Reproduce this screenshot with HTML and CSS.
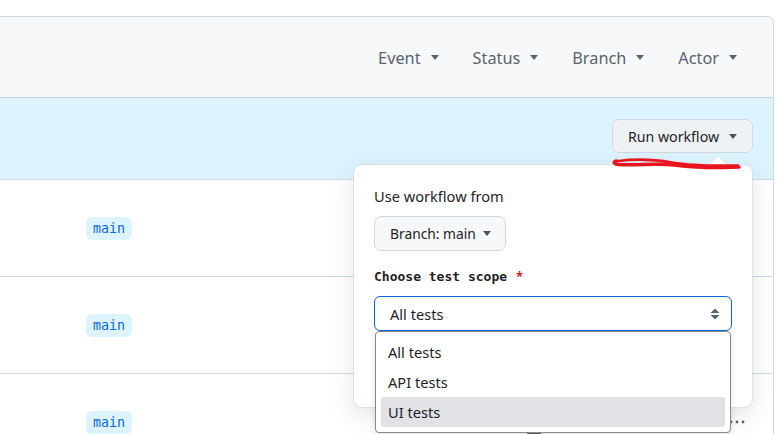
FILE: index.html
```html
<!DOCTYPE html>
<html>
<head>
<meta charset="utf-8">
<link rel="stylesheet" href="styles.css">
</head>
<body>
<div class="box">
  <div class="filters">
    <span class="filter">Event<i class="caret"></i></span>
    <span class="filter">Status<i class="caret"></i></span>
    <span class="filter">Branch<i class="caret"></i></span>
    <span class="filter">Actor<i class="caret"></i></span>
  </div>
  <div class="banner">
    <button class="run">Run workflow<i class="caret dark"></i></button>
    <svg class="scribble" width="132" height="16" viewBox="0 0 132 16">
      <path d="M5 4 C 1 4, 1 7, 6 7.5 C 25 8.5, 45 6, 62 8 C 80 10, 95 11, 112 10.5 L 127 10" fill="none" stroke="#e8141e" stroke-width="3.4" stroke-linecap="round"/>
      <path d="M7 4 C 25 1.5, 45 3, 60 5.5 C 75 8, 95 9, 126 8.5" fill="none" stroke="#e8141e" stroke-width="2.6" stroke-linecap="round"/>
    </svg>
    <div class="popover">
      <svg class="notch" width="20" height="10" viewBox="0 0 20 10"><path d="M0 10 L10 1 L20 10 Z" fill="#fff"/></svg>
      <div class="label">Use workflow from</div>
      <button class="branch">Branch: main<i class="caret dark"></i></button>
      <div class="field-label">Choose test scope <span class="req">*</span></div>
      <div class="field">
        <div class="select">
          <span>All tests</span>
          <svg width="10" height="16" viewBox="0 0 10 16"><path d="M0.5 7 L5 2.5 L9.5 7 Z M0.5 9 L5 13.5 L9.5 9 Z" fill="#59636e"/></svg>
        </div>
        <ul class="options">
          <li>All tests</li>
          <li>API tests</li>
          <li class="hl">UI tests</li>
        </ul>
      </div>
    </div>
  </div>
  <div class="row"><span class="badge">main</span></div>
  <div class="row"><span class="badge">main</span></div>
  <div class="row">
    <span class="badge">main</span>
    <svg class="cal" width="16" height="16" viewBox="0 0 16 16"><path d="M4.75 0a.75.75 0 0 1 .75.75V2h5V.75a.75.75 0 0 1 1.5 0V2h1.25c.97 0 1.75.78 1.75 1.75v10.5A1.75 1.75 0 0 1 13.25 16H2.75A1.75 1.75 0 0 1 1 14.25V3.75C1 2.78 1.78 2 2.75 2H4V.75A.75.75 0 0 1 4.75 0ZM2.5 7.5v6.75c0 .14.11.25.25.25h10.5a.25.25 0 0 0 .25-.25V7.5Z" fill="#59636e"/></svg>
    <svg class="kebab" width="16" height="16" viewBox="0 0 16 16"><circle cx="2" cy="8" r="1.4" fill="#59636e"/><circle cx="8" cy="8" r="1.4" fill="#59636e"/><circle cx="14" cy="8" r="1.4" fill="#59636e"/></svg>
  </div>
</div>
</body>
</html>
```
FILE: styles.css
```css
html, body {
  margin: 0;
  padding: 0;
  background: #fff;
  overflow: hidden;
  height: 434px;
}
body {
  font-family: "Noto Sans", "Open Sans", sans-serif;
  color: #1f2328;
}
.box {
  margin: 16px 7px 0 -10px;
  border: 1px solid #d1d9e0;
  border-radius: 6px 6px 0 0;
}
.filters {
  height: 79px;
  background: #f6f8fa;
  border-radius: 6px 6px 0 0;
  border-bottom: 1px solid #c3d5e4;
  display: flex;
  justify-content: flex-end;
  align-items: center;
  gap: 34px;
  padding-right: 36px;
  padding-top: 1px;
}
.filter {
  font-size: 16.3px;
  color: #59636e;
  display: flex;
  align-items: center;
  gap: 10px;
}
.caret {
  display: inline-block;
  width: 0;
  height: 0;
  border-left: 4.5px solid transparent;
  border-right: 4.5px solid transparent;
  border-top: 5px solid #59636e;
}
.caret.dark {
  border-top-color: #4a525b;
}
.banner {
  position: relative;
  height: 81px;
  background: #ddf4ff;
  border-bottom: 1px solid #d1d9e0;
  display: flex;
  justify-content: flex-end;
  align-items: flex-start;
  padding-right: 20px;
}
.run {
  margin-top: 21px;
  height: 34px;
  width: 141px;
  background: #eff2f5;
  border: 1px solid #d1d9e0;
  border-radius: 7px;
  font-family: inherit;
  font-size: 14.2px;
  color: #1f2328;
  display: flex;
  align-items: center;
  justify-content: center;
  gap: 10px;
  padding: 0;
}
.scribble {
  position: absolute;
  left: 621px;
  top: 59px;
  z-index: 4;
}
.popover {
  position: absolute;
  top: 67px;
  right: 21px;
  width: 398px;
  height: 242px;
  box-sizing: border-box;
  background: #fff;
  border-radius: 8px;
  box-shadow: 0 0 0 1px rgba(209, 217, 224, 0.6), 0 8px 24px rgba(66, 74, 83, 0.16);
  padding: 20px 20px 0 20px;
  z-index: 2;
}
.notch {
  position: absolute;
  top: -9px;
  right: 24px;
}
.label {
  font-size: 14.6px;
  line-height: 22px;
  margin-bottom: 9px;
}
.branch {
  height: 35px;
  width: 132px;
  background: #f6f8fa;
  border: 1px solid #d1d9e0;
  border-radius: 7px;
  font-family: inherit;
  font-size: 13.8px;
  color: #1f2328;
  display: flex;
  align-items: center;
  gap: 7px;
  padding: 0 0 0 15px;
}
.field-label {
  margin-top: 15px;
  font-family: "DejaVu Sans Mono", "Liberation Mono", monospace;
  font-weight: bold;
  font-size: 13px;
  line-height: 20px;
  margin-bottom: 9px;
}
.req {
  color: #d1242f;
  font-family: "Noto Sans", sans-serif;
  margin-left: 1px;
}
.field {
  position: relative;
}
.select {
  height: 35px;
  box-sizing: border-box;
  border: 1px solid #0969da;
  border-radius: 6px;
  display: flex;
  align-items: center;
  justify-content: space-between;
  padding: 0 11px 0 15px;
  font-size: 14.6px;
}
.options {
  position: absolute;
  top: 35px;
  left: 1px;
  right: 1px;
  margin: 0;
  padding: 5px;
  list-style: none;
  background: #fff;
  border: 1px solid #8a8a8a;
  border-radius: 4px;
  box-shadow: 0 2px 6px rgba(0, 0, 0, 0.12);
  z-index: 3;
}
.options li {
  height: 30px;
  line-height: 30px;
  padding-left: 7px;
  font-size: 14.6px;
  color: #1f2328;
  border-radius: 3px;
}
.options li.hl {
  background: #e1e1e6;
}
.row {
  height: 96px;
  border-bottom: 1px solid #d1d9e0;
  display: flex;
  align-items: center;
  padding-left: 95px;
  padding-right: 28px;
}
.badge {
  font-family: "DejaVu Sans Mono", "Liberation Mono", monospace;
  font-size: 13.3px;
  color: #0969da;
  background: #ddf4ff;
  border-radius: 6px;
  padding: 2px 7px;
  line-height: 19px;
}
.cal {
  align-self: flex-start;
  margin-top: 56px;
  margin-left: auto;
  margin-right: 187px;
}
.kebab {
  display: block;
}
```
